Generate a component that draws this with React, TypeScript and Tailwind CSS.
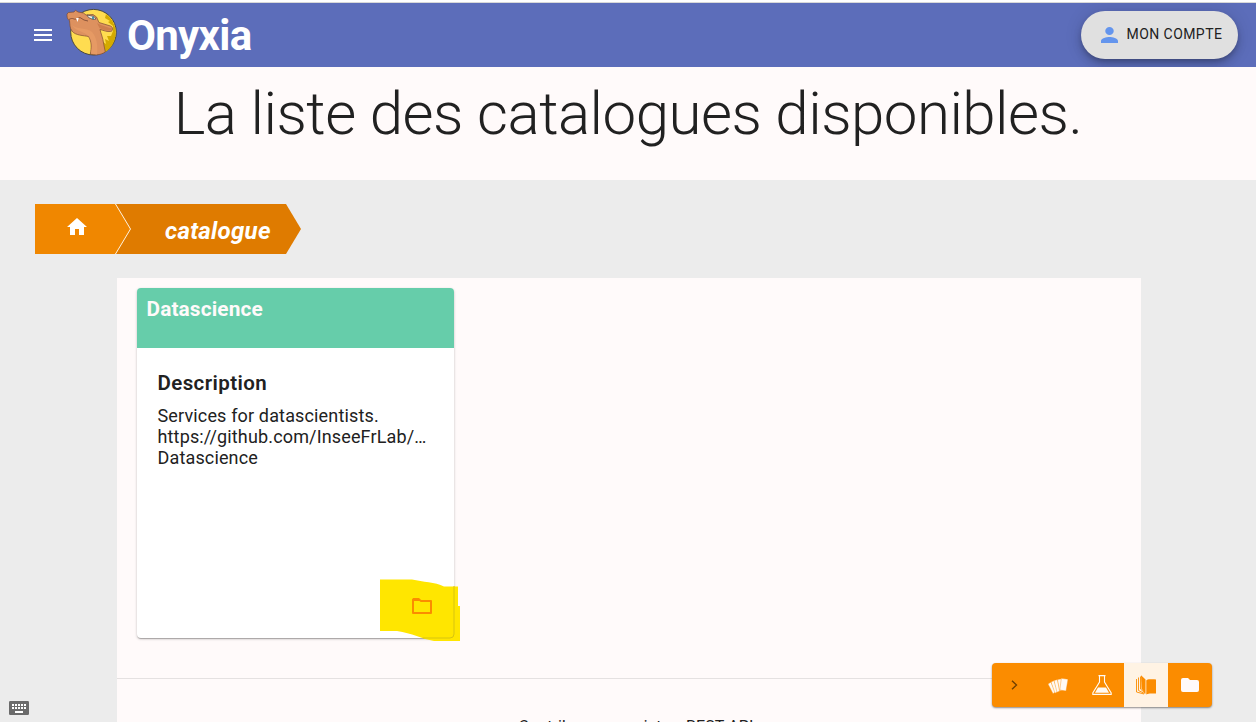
import React from "react";

function DragonLogo() {
  return (
    <svg width="52" height="50" viewBox="0 0 52 50" className="block">
      <circle cx="27.5" cy="25.2" r="22.8" fill="#ffdc50" stroke="#4d4a3c" strokeWidth="1" />
      <path d="M40 7C48 13 51 22 49 31C47 39 42 44 38.500 45.500L37 35L40 37L39 32L43 34L41 29L45 29L47 24L47 19L42 15L44 14L39 11Z" fill="#d4aa00" />
      <path d="M1 7L2.500 5.500L8 5L9.500 3.300L12 5L17.500 6L20 8L27 7.500L30.500 10L33 15.500L44.500 19C47.500 20 47 24.500 44.500 24.500C41 25 38 23.500 34 22.500C35 27 37 31 37.500 36L39.300 45C35 48 29 48.500 24.300 47C25.500 41 26 35 22.500 29.500C18 28.500 9 28.500 6 24C3.500 21 4 17 3.500 13.500C1 12.500 1 9.500 1 7Z" fill="#dd915f" stroke="#7c4c34" strokeWidth=".7" />
      <path d="M6 18C10 25 18 24 23 29.500C27 35 26 41 25 46.500L31 47.500C32 39 31 31 26 25C20 20 11 23 6 18Z" fill="#e69a64" />
      <path d="M31 16C36 19 41 20 46 21.500C46 24 43 24 38 23L33.500 21Z" fill="#cd7e4e" />
      <path d="M3 12.500C7 10 8 13 10 12L14 10.500L18 13L22 14" fill="none" stroke="#804d35" strokeWidth=".9" />
      <path d="M10 11L11.500 15L12.800 11Z" fill="#fff" />
      <path d="M21 8L28 9.500L30 12L27 12.500L22.500 10.500Z" fill="#f8f4e8" stroke="#594e48" strokeWidth=".8" />
      <path d="M26 9.500H28V12H26Z" fill="#4f91a6" />
    </svg>
  );
}

function CardsIcon() {
  return (
    <svg width="20" height="16" viewBox="0 0 20 16" fill="#fffaf4" stroke="#fb8c00" strokeWidth=".4">
      <path d="M0 6L3 4L7.500 14L5 15.700Z" />
      <path d="M3 4L6 2.500L10 13.500L7 15.200Z" />
      <path d="M6 2.500L9.500 1.500L12 13L9 14.300Z" />
      <path d="M9.500 1.500L13.500 .8L14.500 12L11.500 13Z" />
      <path d="M13.300 .3L20 1.300L18 13L11.800 12Z" />
    </svg>
  );
}

function FlaskIcon() {
  return (
    <svg width="20" height="20" viewBox="0 0 20 20" fill="none" stroke="#fffaf4" strokeWidth="1.1">
      <path d="M6.500 .6H13.500M7.500 .8V7L.8 18V19.400H19.200V18L12.500 7V.8" />
      <path d="M6 12.500H14L17 17.700H3Z" fill="#fffaf4" stroke="none" />
    </svg>
  );
}

function BookIcon() {
  return (
    <svg width="20" height="20" viewBox="0 0 20 20" fill="none" stroke="#fb8c00" strokeWidth=".9">
      <path d="M.5 4V17L8 19M2.500 2.500V15.500L8.500 18.500M4.500 1.500V14L9 18" />
      <path d="M5 .3L9.500 4.500V19L5.500 13.500Z" fill="#fb8c00" stroke="none" />
      <path d="M10.300 5.500C12 3.800 14 4.500 20 4.500V18.500C15 18.500 13 18 10.300 19.500Z" fill="#fb8c00" stroke="none" />
    </svg>
  );
}

function Header() {
  return (
    <header className="flex h-[65px] shrink-0 items-center border-t border-[#d8d8d8] bg-[#5c6dba] pl-[34px] pr-[18px]">
      <svg width="18" height="12" viewBox="0 0 18 12" fill="#fff" className="mb-px">
        <path d="M0 0h18v2H0zM0 5h18v2H0zM0 10h18v2H0z" />
      </svg>
      <div className="mb-[6px] ml-[14px]"><DragonLogo /></div>
      <span className="ml-[9px] mt-[2px] text-[42px] font-bold leading-[48px] tracking-[-0.7px] text-white">Onyxia</span>
      <button className="ml-auto flex h-12 w-[157px] items-center rounded-full bg-[#e0e0e0] pl-[20px] text-[14px] font-[450] tracking-[0.44px] text-[#212121] shadow-[0_3px_5px_-1px_rgba(0,0,0,0.2),0_6px_10px_0_rgba(0,0,0,0.14),0_1px_18px_0_rgba(0,0,0,0.12)]">
        <svg width="17" height="16" viewBox="0 0 16 16" preserveAspectRatio="none" fill="#6495ed">
          <path d="M8 8a4 4 0 1 0 0-8 4 4 0 0 0 0 8zm0 2c-2.700 0-8 1.300-8 4v2h16v-2c0-2.700-5.300-4-8-4z" />
        </svg>
        <span className="mb-[2px] ml-[8.500px] whitespace-nowrap">MON COMPTE</span>
      </button>
    </header>
  );
}

function Breadcrumb() {
  return (
    <nav className="relative ml-[35px] mt-6 flex h-[50px] w-[266px] shrink-0">
      <svg width="266" height="50" className="absolute inset-0">
        <path d="M81 0H251L266 25L251 50H81Z" fill="#df7b00" />
        <path d="M0 0H80.500L95.500 25L80.500 50H0Z" fill="#f08700" />
        <path d="M80.500 0L95.500 25L80.500 50" fill="none" stroke="#fff3e0" strokeWidth="1" />
      </svg>
      <span className="relative flex w-[96px] pl-[32px] pt-[14px]">
        <svg width="20" height="17" viewBox="0 0 20 17" fill="#fff"><path d="M8 17v-6h4v6h5V9h3L10 0 0 9h3v8z" /></svg>
      </span>
      <span className="relative pl-[34px] pt-[13px] text-[24px] font-bold italic leading-[29px] tracking-[0.3px] text-white">catalogue</span>
    </nav>
  );
}

function ServiceCard() {
  return (
    <article className="relative ml-5 mt-[10px] flex h-[350px] w-[317px] shrink-0 flex-col rounded-[4px] bg-white shadow-[0_1px_3px_0_rgba(0,0,0,0.2),0_1px_1px_0_rgba(0,0,0,0.14),0_2px_1px_-1px_rgba(0,0,0,0.12)]">
      <div className="h-[60px] rounded-t-[4px] bg-[#66cdaa] pl-[9.500px] pt-[8px] text-[20.800px] font-bold leading-[26px] tracking-[0.14px] text-[#fffafa]">Datascience</div>
      <div className="px-[20.500px] pt-[21px] text-[18px] leading-[21px] tracking-[0.15px] text-[#212121]">
        <h3 className="mb-[8px] text-[20.500px] font-semibold leading-[28px] tracking-[0.4px]">Description</h3>
        <p>Services for datascientists.</p>
        <p>https://github.com/InseeFrLab/…</p>
        <p>Datascience</p>
      </div>
      <svg width="80" height="62" viewBox="0 0 80 62" className="absolute left-[243px] top-[291px]">
        <path d="M0 .5H32C43 3 55 3 64 7.500H78V27H80V62H54C42 60 32 54 17 52H0Z" fill="#ffe600" />
        <path d="M43 59H70Q74 59 74 55V7" fill="none" stroke="#d7c410" strokeWidth="1" />
        <path d="M33 20.500h6l2 1.500h10v12H33z" fill="none" stroke="#fb8c00" strokeWidth="2" strokeLinejoin="round" />
        <path d="M33 19h6l2 3h-8z" fill="#fb8c00" />
      </svg>
    </article>
  );
}

function Toolbar() {
  return (
    <div className="absolute left-[992px] top-[663px] flex h-[44px] w-[220px] overflow-hidden rounded-[4px] bg-[#fb8c00] shadow-[0_1px_2px_rgba(0,0,0,0.45)]">
      <button className="flex w-11 items-center justify-center"><svg width="7" height="10" viewBox="0 0 7 10" fill="none" stroke="#714000" strokeWidth="1.400"><path d="M1 .7L5.500 5L1 9.300" /></svg></button>
      <button className="flex w-11 items-center justify-center pt-px"><CardsIcon /></button>
      <button className="flex w-11 items-center justify-center"><FlaskIcon /></button>
      <button className="flex w-11 items-center justify-center bg-[#fff3e4]"><BookIcon /></button>
      <button className="flex w-11 items-center justify-center"><svg width="18" height="14" viewBox="0 0 18 14" fill="#fffafa"><path d="M2 0H7L9 2H16Q18 2 18 4V12Q18 14 16 14H2Q0 14 0 12V2Q0 0 2 0Z" /></svg></button>
    </div>
  );
}

function KeyboardBadge() {
  return (
    <svg width="20" height="14" viewBox="0 0 20 14" className="absolute left-[9px] top-[701px]">
      <rect width="20" height="14" rx="1.200" fill="#6b6b6b" />
      <path d="M3 3h2v2H3zM6 3h2v2H6zM9 3h2v2H9zM12 3h2v2h-2zM15 3h2v2h-2zM3 6h2v2H3zM6 6h2v2H6zM9 6h2v2H9zM12 6h2v2h-2zM15 6h2v2h-2zM6 10h8v2H6z" fill="#fff" />
    </svg>
  );
}

export default function App() {
  return (
    <div className="relative flex h-[722px] w-[1256px] flex-col overflow-hidden bg-[#ececec] pt-[2px] font-['Roboto',sans-serif] text-[#212121] before:absolute before:inset-x-0 before:top-0 before:h-[2px] before:bg-white">
      <Header />
      <h1 className="h-[113px] shrink-0 whitespace-nowrap bg-[#fffafa] pt-[11px] text-center text-[60px] font-light leading-[72px] tracking-[-0.52px]">La liste des catalogues disponibles.</h1>
      <Breadcrumb />
      <main className="ml-[117px] mt-6 flex h-[444px] w-[1024px] shrink-0 flex-col bg-[#fffafa]">
        <ServiceCard />
        <footer className="mt-10 flex flex-1 justify-center gap-[10px] border-t border-[#e5e1e1] pl-[14px] pt-[36px] text-[16px] leading-[24px] tracking-[0.1px]">
          <span>Contribuer au projet</span>
          <span>-</span>
          <span>REST API</span>
        </footer>
      </main>
      <Toolbar />
      <KeyboardBadge />
    </div>
  );
}
